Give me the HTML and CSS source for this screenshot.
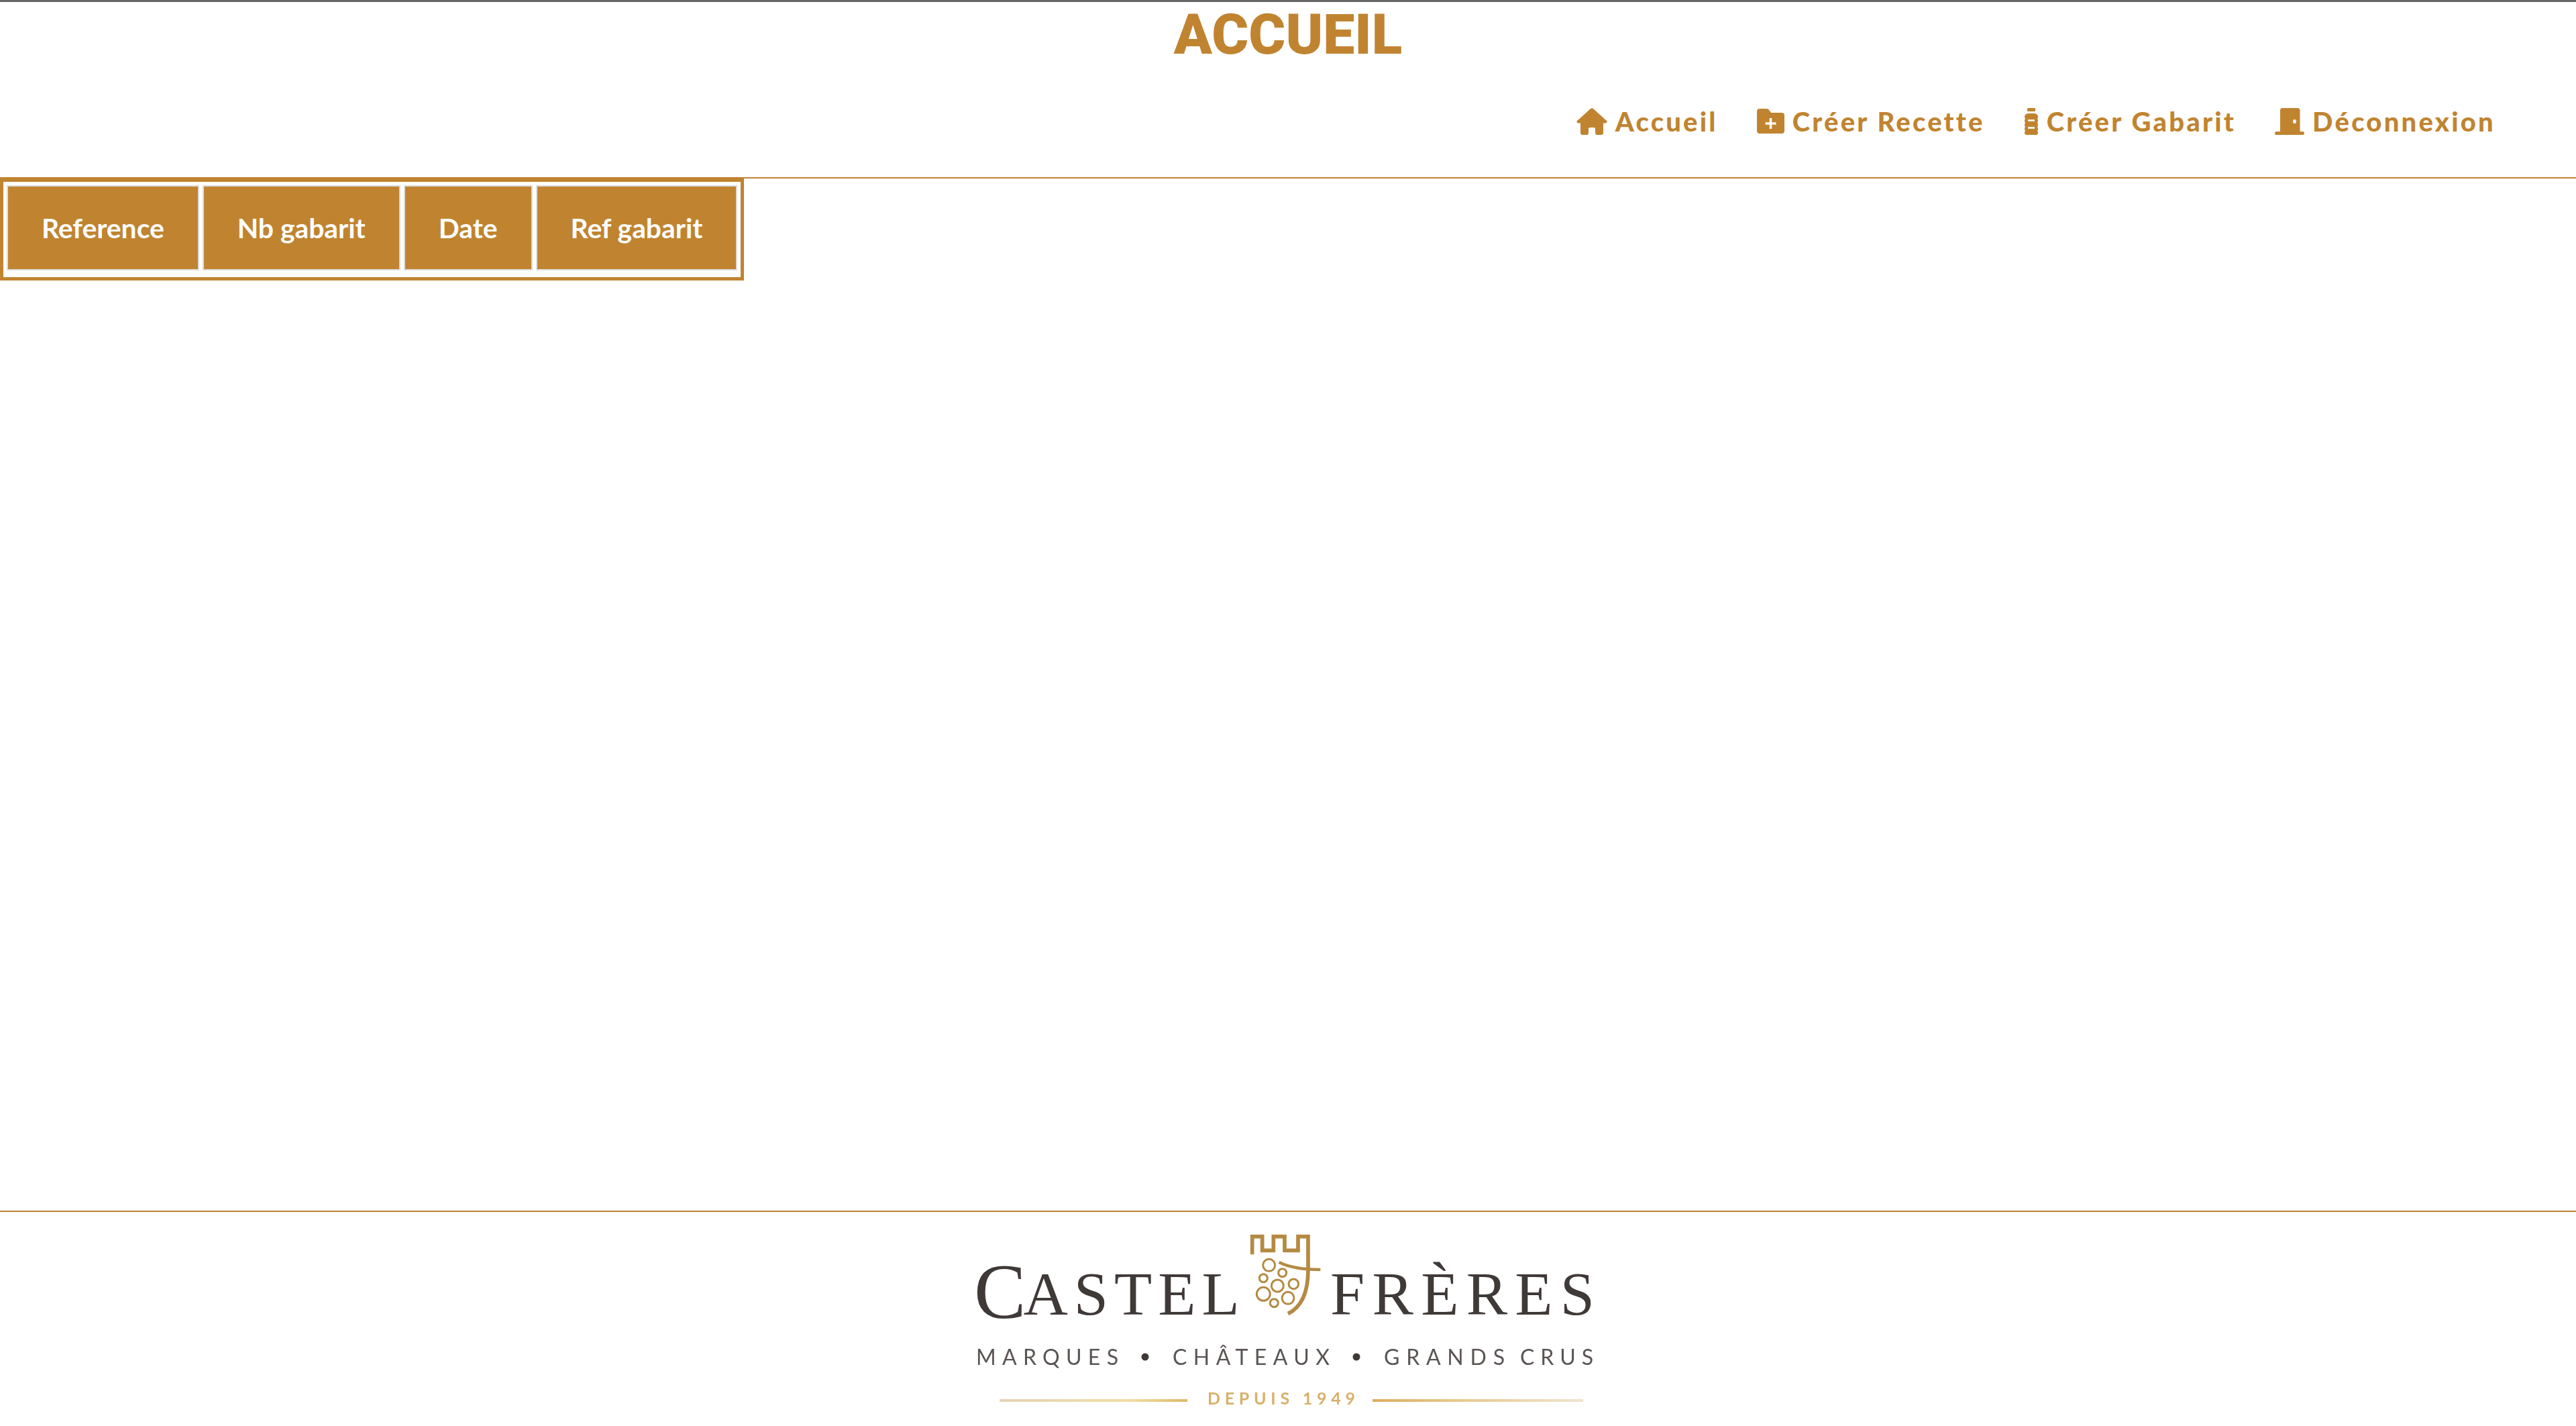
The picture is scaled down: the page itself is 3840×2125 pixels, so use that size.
FILE: index.html
```html
<!DOCTYPE html>
<html lang="fr">
  <head>
    <meta charset="UTF-8" />
    <title>Accueil</title>
    <link rel="stylesheet" href="styles.css">
  </head>
  <body>
    <div id="page">
      <header id="header">
        <h1 id="title">ACCUEIL</h1>
        <nav id="menu">
          <a class="menuItem" href="#">
            <svg class="menuIcon" width="46" height="40" viewBox="0 0 46 40">
              <path d="M23 0L25 1L45 19Q46.5 21 44 22.5H40V37Q40 40 37 40H31Q28 40 28 37V31Q28 29 26 29H20Q18 29 18 31V37Q18 40 15 40H9Q6 40 6 37V22.5H2Q-.5 21 1 19L21 1Z" />
            </svg>
            Accueil
          </a>
          <a class="menuItem" href="#">
            <svg class="menuIcon" width="41" height="40" viewBox="0 0 41 40">
              <path d="M4 1H15Q17 1 19 4L21 7H37Q41 7 41 11V34Q41 38 37 38H4Q0 38 0 34V5Q0 1 4 1Z" />
              <path class="iconCut" d="M20.5 15V31M12.5 23H28.5" />
            </svg>
            Créer Recette
          </a>
          <a class="menuItem" href="#">
            <svg class="menuIcon" width="22" height="40" viewBox="0 0 22 40">
              <rect x="5" y="0" width="12" height="5" rx="1" />
              <path d="M6 8H16Q21 9 21 13Q21 15 20 16Q21 17 21 19Q21 21 20 22Q21 23 21 25Q21 27 20 28Q21 29 21 31Q21 33 20 34Q21 35 21 37Q21 40 18 40H4Q1 40 1 37Q1 35 2 34Q1 33 1 31Q1 29 2 28Q1 27 1 25Q1 23 2 22Q1 21 1 19Q1 17 2 16Q1 15 1 13Q1 9 6 8Z" />
              <path class="iconCut iconThin" d="M6 18.500H16M6 29.500H16" />
            </svg>
            Créer Gabarit
          </a>
          <a class="menuItem" href="#">
            <svg class="menuIcon" width="44" height="40" viewBox="0 0 44 40">
              <path d="M11 0H34Q37.500 0 37.500 4V35H42Q44 35 44 37.500Q44 40 42 40H2Q0 40 0 37.500Q0 35 2 35H8V4Q8 0 11 0Z" />
              <ellipse class="iconKnob" cx="29.500" cy="20" rx="2.500" ry="3" />
            </svg>
            Déconnexion
          </a>
        </nav>
      </header>

      <main id="content">
        <table id="recipes">
          <thead>
            <tr>
              <th>Reference</th>
              <th>Nb gabarit</th>
              <th>Date</th>
              <th>Ref gabarit</th>
            </tr>
          </thead>
          <tbody>
            <tr></tr>
          </tbody>
        </table>
      </main>

      <footer id="footer">
        <svg class="logo" width="940" height="265" viewBox="0 0 940 265">
          <defs>
            <linearGradient id="lineLeft" x1="0" x2="1" y1="0" y2="0">
              <stop offset="0" stop-color="#e6d3b4" />
              <stop offset="0.7" stop-color="#f1dca4" />
              <stop offset="1" stop-color="#e0b765" />
            </linearGradient>
            <linearGradient id="lineRight" x1="0" x2="1" y1="0" y2="0">
              <stop offset="0" stop-color="#dcae5c" />
              <stop offset="0.4" stop-color="#e8c78c" />
              <stop offset="1" stop-color="#f0e4d0" />
            </linearGradient>
          </defs>

          <text class="logoName" x="2" y="128"><tspan class="logoCap">C</tspan><tspan class="logoRest" dx="-4" dy="-5">ASTEL</tspan></text>
          <text class="logoName" x="533" y="123" textLength="394">FRÈRES</text>

          <g transform="translate(390 -10) scale(0.3333)" class="castle">
            <path d="M80 130V50H125V112H175V50H225V112H285V50H330V200C330 300 300 365 240 395" />
            <path class="swoosh" d="M200 165C250 190 310 198 385 198" />
            <circle cx="155" cy="178" r="27" />
            <circle cx="215" cy="212" r="18" />
            <circle cx="130" cy="236" r="18" />
            <circle cx="193" cy="270" r="27" />
            <circle cx="265" cy="262" r="22" />
            <circle cx="130" cy="307" r="30" />
            <circle cx="240" cy="325" r="27" />
            <circle cx="178" cy="347" r="18" />
          </g>

          <text class="logoTag" x="5" y="198" textLength="212">MARQUES</text>
          <circle class="logoDot" cx="257" cy="186" r="5.500" />
          <text class="logoTag" x="298" y="198" textLength="234">CHÂTEAUX</text>
          <circle class="logoDot" cx="572" cy="186" r="5.500" />
          <text class="logoTag" x="613" y="198" textLength="180">GRANDS</text>
          <text class="logoTag" x="816" y="198" textLength="109">CRUS</text>

          <rect x="40" y="249" width="280" height="4" fill="url(#lineLeft)" />
          <text class="logoYear" x="350" y="257" textLength="220">DEPUIS 1949</text>
          <rect x="596" y="249" width="314" height="4" fill="url(#lineRight)" />
        </svg>
      </footer>
    </div>
  </body>
</html>
```

FILE: styles.css
```css
body {
  margin: 0;
  background-color: #fff;
  font-family: "Lato", "Liberation Sans", sans-serif;
}
#page {
  display: flex;
  flex-direction: column;
  height: 100vh;
}
#header {
  height: 261px;
  border-top: 3px solid #666;
  border-bottom: 2px solid #c08430;
  color: #c08430;
}
#title {
  margin: 0;
  height: 98px;
  line-height: 98px;
  font-family: "Roboto", sans-serif;
  font-size: 84px;
  font-weight: 900;
  text-align: center;
}
#menu {
  display: flex;
  justify-content: flex-end;
  gap: 58px;
  padding: 56px 120px 0 0;
}
.menuItem {
  display: flex;
  align-items: center;
  gap: 12px;
  color: #c08430;
  font-size: 40px;
  font-weight: 900;
  letter-spacing: 3.200px;
  text-decoration: none;
}
.menuIcon {
  fill: #c08430;
}
.iconCut {
  fill: none;
  stroke: #fff;
  stroke-width: 3.500;
}
.iconThin {
  stroke-width: 2.500;
}
.iconKnob {
  fill: #fff;
}
#content {
  flex: 1;
}
#recipes {
  border: 5px solid #c08430;
  border-spacing: 5px;
}
#recipes th {
  height: 123px;
  padding: 0 50px;
  border: 2px solid #ddd;
  background-color: #c08430;
  color: #fff;
  font-size: 40.800px;
  font-weight: 700;
}
#footer {
  display: flex;
  justify-content: center;
  height: 289px;
  padding-top: 30px;
  border-top: 2px solid #c08430;
}
.logo {
  filter: blur(0.6px);
}
.logoName {
  fill: #3f3a38;
  font-family: "Liberation Serif", serif;
  font-size: 92px;
}
.logoCap {
  font-size: 116px;
}
.logoRest {
  letter-spacing: 9px;
}
.logoTag {
  fill: #5a5553;
  font-size: 32px;
}
.logoDot {
  fill: #3f3a38;
}
.logoYear {
  fill: #d8b06a;
  font-size: 25px;
  font-weight: 700;
}
.castle {
  fill: none;
  stroke: #b48a42;
  stroke-width: 9;
}
.castle path {
  stroke-width: 17;
}
.castle .swoosh {
  stroke-width: 13;
}
```
